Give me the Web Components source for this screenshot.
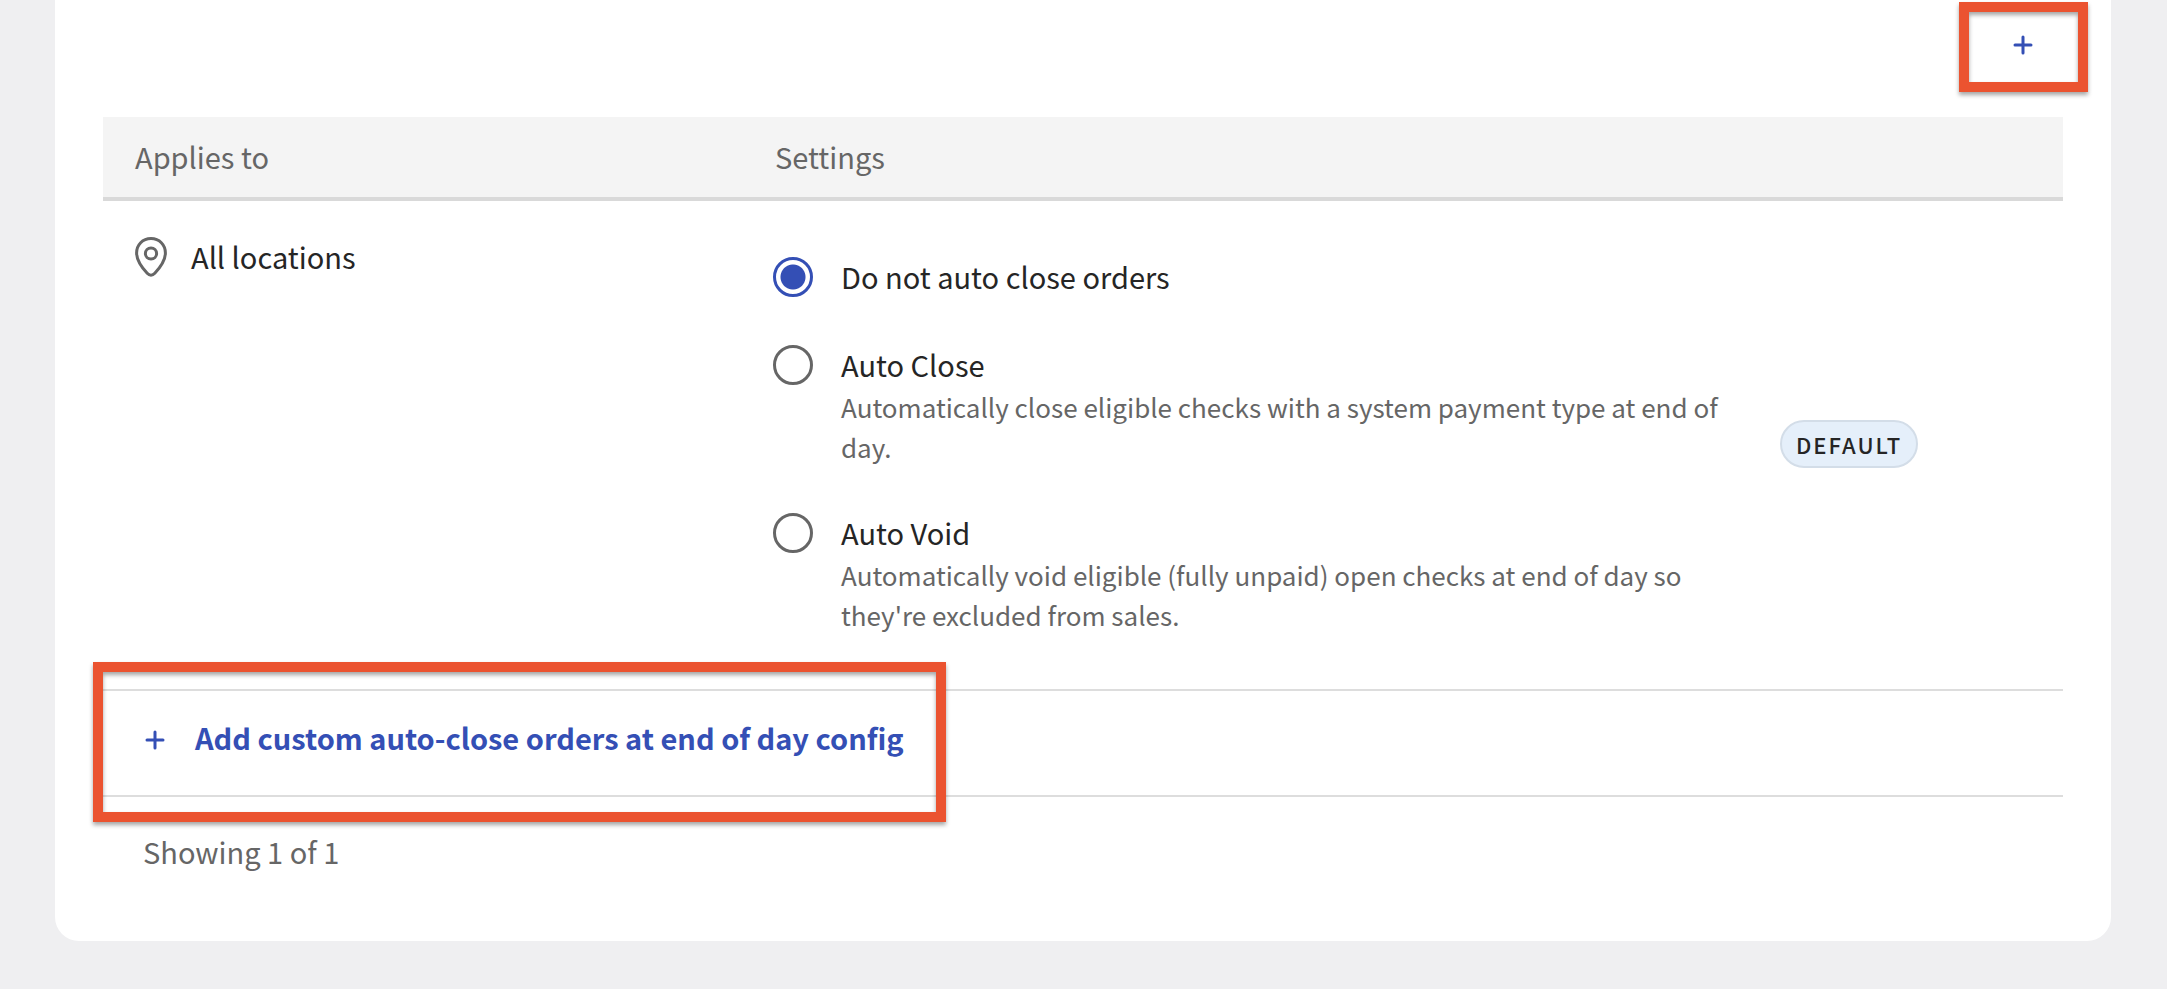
<!DOCTYPE html>
<html lang="en">
<head>
<meta charset="utf-8">
<meta name="viewport" content="width=device-width, initial-scale=1">
<title>Auto-close orders at end of day</title>
<style>
  :root {
    --ink: #252525;
    --muted: #666666;
    --accent: #344fb5;
    --rule: #dddddd;
  }
  body {
    margin: 0;
    background: #efeff1;
    color: var(--ink);
    font: 29px/46px "Noto Sans CJK SC", "Noto Sans", sans-serif;
  }
</style>
</head>
<body>
<settings-card>
  <card-toolbar slot="toolbar">
    <highlight-frame style="--frame-inset: -3px -25px -7px -24px">
      <icon-button label="Add config"><plus-icon></plus-icon></icon-button>
    </highlight-frame>
  </card-toolbar>
  <config-table></config-table>
  <add-row>
    <highlight-frame style="--frame-inset: -29px -10px -27px">
      <add-button>Add custom auto-close orders at end of day config</add-button>
    </highlight-frame>
  </add-row>
  <result-count slot="footer">Showing 1 of 1</result-count>
</settings-card>

<script>
const define = (name, html, setup) => {
  const template = document.createElement('template');
  template.innerHTML = html;
  customElements.define(name, class extends HTMLElement {
    constructor() {
      super();
      this.attachShadow({ mode: 'open' }).append(template.content.cloneNode(true));
    }
    connectedCallback() {
      if (setup) setup(this, this.shadowRoot);
    }
  });
};

define('settings-card', `
  <style>
    :host { display: block; margin: 0 56px 48px 55px; padding: 5px 48px 67px; background: #fff; border-radius: 0 0 24px 24px; }
  </style>
  <slot name="toolbar"></slot>
  <slot></slot>
  <slot name="footer"></slot>
`);

define('card-toolbar', `
  <style>
    :host { display: flex; justify-content: flex-end; margin-bottom: 32px; }
  </style>
  <slot></slot>
`);

/* Callout frame drawn over whatever it wraps. */
define('highlight-frame', `
  <style>
    :host { display: block; position: relative; width: fit-content; }
    .frame {
      position: absolute; inset: var(--frame-inset, -10px); box-sizing: border-box;
      border: 10px solid #eb5330; pointer-events: none;
      filter: drop-shadow(0 3px 2px rgba(0, 0, 0, .35));
    }
  </style>
  <slot></slot>
  <div class="frame"></div>
`);

define('plus-icon', `
  <style>
    :host { display: block; width: 24px; height: 24px; }
    svg { display: block; }
  </style>
  <svg width="24" height="24" viewBox="0 0 24 24" fill="none" stroke="currentColor" stroke-width="3" stroke-linecap="round" aria-hidden="true">
    <path d="M12 4v16M4 12h16"/>
  </svg>
`);

define('pin-icon', `
  <style>
    :host { display: block; width: 32px; height: 40px; }
    svg { display: block; }
  </style>
  <svg width="32" height="40" viewBox="0 0 32 40" fill="none" stroke="#666" stroke-width="3" aria-hidden="true">
    <path d="M16 1.6C7.600 1.600 1.600 8 1.600 16c0 7.600 6 15.300 10.600 20.300 2.400 2.600 5.200 2.600 7.600 0C24.400 31.300 30.400 23.600 30.400 16c0-8-6-14.400-14.400-14.400z"/>
    <circle cx="16" cy="16.500" r="5.600"/>
  </svg>
`);

define('icon-button', `
  <style>
    :host { display: block; }
    button {
      display: flex; align-items: center; justify-content: center;
      width: 80px; height: 80px; padding: 0; border: 0; background: none;
      color: var(--accent); cursor: pointer;
    }
  </style>
  <button type="button"><slot></slot></button>
`, (host, root) => {
  root.querySelector('button').setAttribute('aria-label', host.getAttribute('label'));
});

define('status-badge', `
  <style>
    :host {
      display: inline-block; box-sizing: border-box; height: 48px; padding: 0 14px;
      border: 2px solid #d3dde8; border-radius: 24px; background: #e5effa;
      font-size: 22px; line-height: 44px; font-weight: 500; letter-spacing: 2px; white-space: nowrap;
    }
  </style>
  <slot></slot>
`);

define('close-options', `
  <style>
    :host { display: block; }
    fieldset { display: grid; gap: 42px; margin: 0; padding: 0; border: 0; min-width: 0; }
    .option { display: grid; grid-template-columns: 40px 1fr; column-gap: 28px; }
    input {
      appearance: none; box-sizing: border-box; width: 40px; height: 40px; margin: 4px 0 0;
      border: 3px solid var(--muted); border-radius: 50%; background: #fff;
    }
    input:checked { border-color: var(--accent); background: radial-gradient(circle, var(--accent) 12px, #fff 13px); }
    p { grid-column: 2; margin: 0; font-size: 26px; line-height: 40px; color: var(--muted); }
  </style>
  <fieldset aria-label="Auto-close setting">
    <div class="option">
      <input type="radio" name="mode" id="none" checked>
      <label for="none">Do not auto close orders</label>
    </div>
    <div class="option">
      <input type="radio" name="mode" id="close" aria-describedby="close-help">
      <label for="close">Auto Close</label>
      <p id="close-help">Automatically close eligible checks with a system payment type at end of day.</p>
    </div>
    <div class="option">
      <input type="radio" name="mode" id="void" aria-describedby="void-help">
      <label for="void">Auto Void</label>
      <p id="void-help">Automatically void eligible (fully unpaid) open checks at end of day so they're excluded from sales.</p>
    </div>
  </fieldset>
`);

define('config-table', `
  <style>
    :host { display: block; }
    table { width: 100%; border-collapse: separate; border-spacing: 0; table-layout: fixed; }
    .applies { width: 640px; }
    .status { width: 313px; }
    th {
      padding: 16px 32px 18px; background: #f4f4f4; border-bottom: 4px solid #d9d9d9;
      color: var(--muted); font-weight: 400; text-align: left;
    }
    td { padding: 52px 30px 54px; border-bottom: 2px solid var(--rule); vertical-align: top; }
    td:first-child { padding-top: 32px; padding-left: 32px; }
    td.options { padding-right: 0; }
    td.state { vertical-align: middle; line-height: 0; }
    .place { display: flex; gap: 24px; align-items: flex-start; }
    pin-icon { margin-top: 4px; }
  </style>
  <table>
    <colgroup><col class="applies"><col><col class="status"></colgroup>
    <thead>
      <tr><th scope="col">Applies to</th><th scope="col" colspan="2">Settings</th></tr>
    </thead>
    <tbody>
      <tr>
        <td><div class="place"><pin-icon></pin-icon><span>All locations</span></div></td>
        <td class="options"><close-options></close-options></td>
        <td class="state"><status-badge>DEFAULT</status-badge></td>
      </tr>
    </tbody>
  </table>
`);

define('add-row', `
  <style>
    :host { display: block; border-bottom: 2px solid var(--rule); }
  </style>
  <slot></slot>
`);

define('add-button', `
  <style>
    :host { display: block; }
    button {
      display: flex; align-items: flex-start; gap: 28px; padding: 23px 32px 35px 40px; border: 0; background: none;
      font: inherit; font-weight: 700; color: var(--accent); text-align: left; cursor: pointer;
    }
    plus-icon { margin-top: 14px; }
  </style>
  <button type="button"><plus-icon></plus-icon><span><slot></slot></span></button>
`);

define('result-count', `
  <style>
    :host { display: block; padding: 31px 40px 0; color: var(--muted); }
  </style>
  <slot></slot>
`);
</script>
</body>
</html>
